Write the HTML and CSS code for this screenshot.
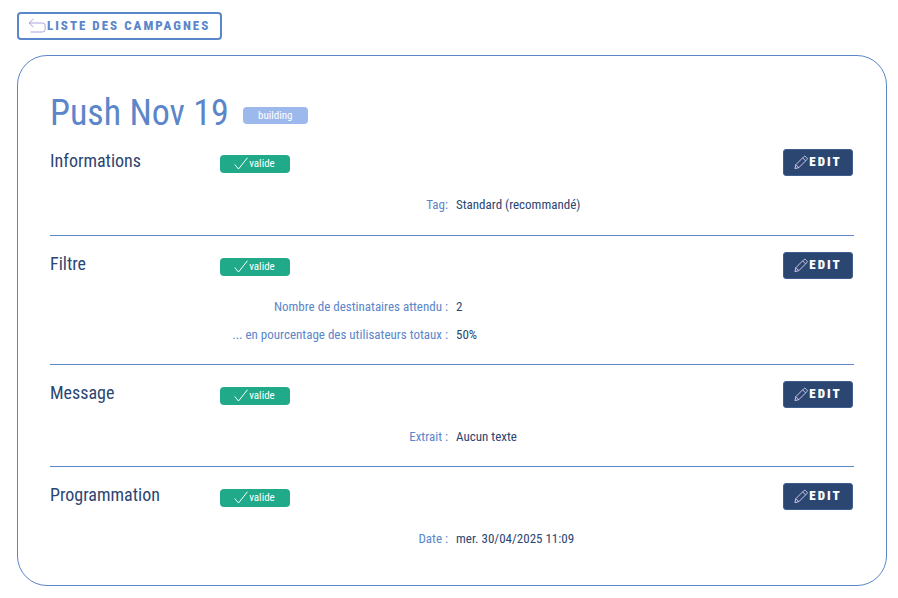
FILE: index.html
```html
<!DOCTYPE html>
<html lang="fr">
<head>
<meta charset="utf-8">
<title>Push Nov 19</title>
<link rel="stylesheet" href="styles.css">
</head>
<body>
<a class="back" href="#">
  <svg class="back-icon" width="18" height="16" viewBox="0 0 18 16" fill="none"><path d="M5.5 1 1 5h13.5a2.7 2.7 0 0 1 2.7 2.7v3.6a2.7 2.7 0 0 1-2.7 2.7H2.5M1 5l4.5 4" stroke="#a9a6e0" stroke-width="1"/></svg>
  <span class="back-text">LISTE DES CAMPAGNES</span>
</a>
<main class="card">
  <header class="title-row">
    <h1>Push Nov 19</h1>
    <span class="status">building</span>
  </header>

  <section class="section first">
    <div class="head">
      <h2>Informations</h2>
      <span class="valid"><svg width="14" height="13" viewBox="0 0 14 13" fill="none"><path d="M.7 7.5 4.5 12 13.5.7" stroke="#fff" stroke-width="1"/></svg>valide</span>
      <button class="edit"><svg width="14" height="15" viewBox="0 0 15 15" fill="none"><path d="M1 14l1-4.2L10.5 1.3a1.5 1.5 0 0 1 2.1 0l1.1 1.1a1.5 1.5 0 0 1 0 2.1L5.2 13zM2 9.8 5.2 13M9.3 2.6l3.1 3.1" stroke="#d8cfe8" stroke-width="1"/></svg><span class="edit-text">EDIT</span></button>
    </div>
    <div class="row"><span class="label">Tag:</span><span class="value">Standard (recommandé)</span></div>
  </section>

  <section class="section">
    <div class="head">
      <h2>Filtre</h2>
      <span class="valid"><svg width="14" height="13" viewBox="0 0 14 13" fill="none"><path d="M.7 7.5 4.5 12 13.5.7" stroke="#fff" stroke-width="1"/></svg>valide</span>
      <button class="edit"><svg width="14" height="15" viewBox="0 0 15 15" fill="none"><path d="M1 14l1-4.2L10.5 1.3a1.5 1.5 0 0 1 2.1 0l1.1 1.1a1.5 1.5 0 0 1 0 2.1L5.2 13zM2 9.8 5.2 13M9.3 2.6l3.1 3.1" stroke="#d8cfe8" stroke-width="1"/></svg><span class="edit-text">EDIT</span></button>
    </div>
    <div class="row row-lifted"><span class="label">Nombre de destinataires attendu :</span><span class="value">2</span></div>
    <div class="row"><span class="label">... en pourcentage des utilisateurs totaux :</span><span class="value">50%</span></div>
  </section>

  <section class="section">
    <div class="head">
      <h2>Message</h2>
      <span class="valid"><svg width="14" height="13" viewBox="0 0 14 13" fill="none"><path d="M.7 7.5 4.5 12 13.5.7" stroke="#fff" stroke-width="1"/></svg>valide</span>
      <button class="edit"><svg width="14" height="15" viewBox="0 0 15 15" fill="none"><path d="M1 14l1-4.2L10.5 1.3a1.5 1.5 0 0 1 2.1 0l1.1 1.1a1.5 1.5 0 0 1 0 2.1L5.2 13zM2 9.8 5.2 13M9.3 2.6l3.1 3.1" stroke="#d8cfe8" stroke-width="1"/></svg><span class="edit-text">EDIT</span></button>
    </div>
    <div class="row"><span class="label">Extrait :</span><span class="value">Aucun texte</span></div>
  </section>

  <section class="section">
    <div class="head">
      <h2>Programmation</h2>
      <span class="valid"><svg width="14" height="13" viewBox="0 0 14 13" fill="none"><path d="M.7 7.5 4.5 12 13.5.7" stroke="#fff" stroke-width="1"/></svg>valide</span>
      <button class="edit"><svg width="14" height="15" viewBox="0 0 15 15" fill="none"><path d="M1 14l1-4.2L10.5 1.3a1.5 1.5 0 0 1 2.1 0l1.1 1.1a1.5 1.5 0 0 1 0 2.1L5.2 13zM2 9.8 5.2 13M9.3 2.6l3.1 3.1" stroke="#d8cfe8" stroke-width="1"/></svg><span class="edit-text">EDIT</span></button>
    </div>
    <div class="row"><span class="label">Date :</span><span class="value">mer. 30/04/2025 11:09</span></div>
  </section>
</main>
</body>
</html>
```

FILE: styles.css
```css
* { box-sizing: border-box; }
html, body { margin: 0; padding: 0; }
body {
  background: #fff;
  font-family: Roboto, "Liberation Sans", sans-serif;
  color: #2c4672;
  padding: 12px 11px 0 17px;
}
.back {
  display: inline-flex;
  align-items: center;
  gap: 1px;
  width: 205px;
  height: 28px;
  padding: 0 9px;
  border: 2px solid #5b86c9;
  border-radius: 4px;
  color: #5b86c9;
  font-size: 13px;
  font-weight: 800;
  font-stretch: 85%;
  letter-spacing: 2px;
  text-decoration: none;
  white-space: nowrap;
}
.back-icon { flex: none; }
.back-text { margin-bottom: 2px; }
.card {
  margin-top: 15px;
  width: 870px;
  height: 531px;
  padding: 26px 32px 0 32px;
  border: 1px solid #5b86c9;
  border-radius: 30px;
}
.title-row {
  display: flex;
  align-items: center;
  height: 67px;
  padding-bottom: 6px;
}
h1 {
  margin: 0;
  font-size: 36px;
  font-weight: 400;
  font-stretch: 85%;
  color: #5b86c9;
}
.status {
  margin-left: 14px;
  width: 65px;
  height: 17px;
  margin-top: 5px;
  border-radius: 4px;
  background: #9db8ec;
  color: #fff;
  font-size: 11px;
  font-stretch: 85%;
  line-height: 17px;
  text-align: center;
}
.section {
  padding: 16px 0 17px;
  border-top: 1px solid #5b86c9;
}
.section.first {
  border-top: 0;
  padding-top: 0;
  padding-bottom: 18px;
}
.head {
  display: flex;
  align-items: center;
  height: 27px;
  margin-bottom: 14px;
}
h2 {
  margin: 0;
  width: 170px;
  font-size: 18px;
  font-weight: 400;
  font-stretch: 85%;
  color: #2c4672;
  position: relative;
  top: -2px;
}
.valid {
  display: flex;
  align-items: center;
  justify-content: center;
  gap: 1px;
  width: 70px;
  height: 18px;
  margin-top: 2px;
  border-radius: 4px;
  background: #20aa89;
  color: #fff;
  font-size: 11px;
  font-stretch: 85%;
  padding-right: 1px;
}
.edit {
  display: flex;
  align-items: center;
  justify-content: center;
  gap: 1px;
  margin-left: auto;
  margin-right: 1px;
  width: 70px;
  height: 27px;
  padding: 0;
  border: 1px solid #3d5e8e;
  border-radius: 3px;
  background: #2c4672;
  color: #fff;
  font-family: Roboto, sans-serif;
  font-size: 13px;
  font-weight: 900;
  font-stretch: 85%;
  letter-spacing: 2px;
}
.edit-text {
  margin-bottom: 3px;
}
.row {
  display: flex;
  align-items: center;
  height: 27px;
  padding-top: 2px;
  font-size: 13px;
  font-stretch: 85%;
}
.row-lifted {
  padding-top: 0;
}
.label {
  width: 398px;
  text-align: right;
  color: #5b86c9;
}
.value {
  margin-left: 8px;
  color: #2c4672;
}
```
